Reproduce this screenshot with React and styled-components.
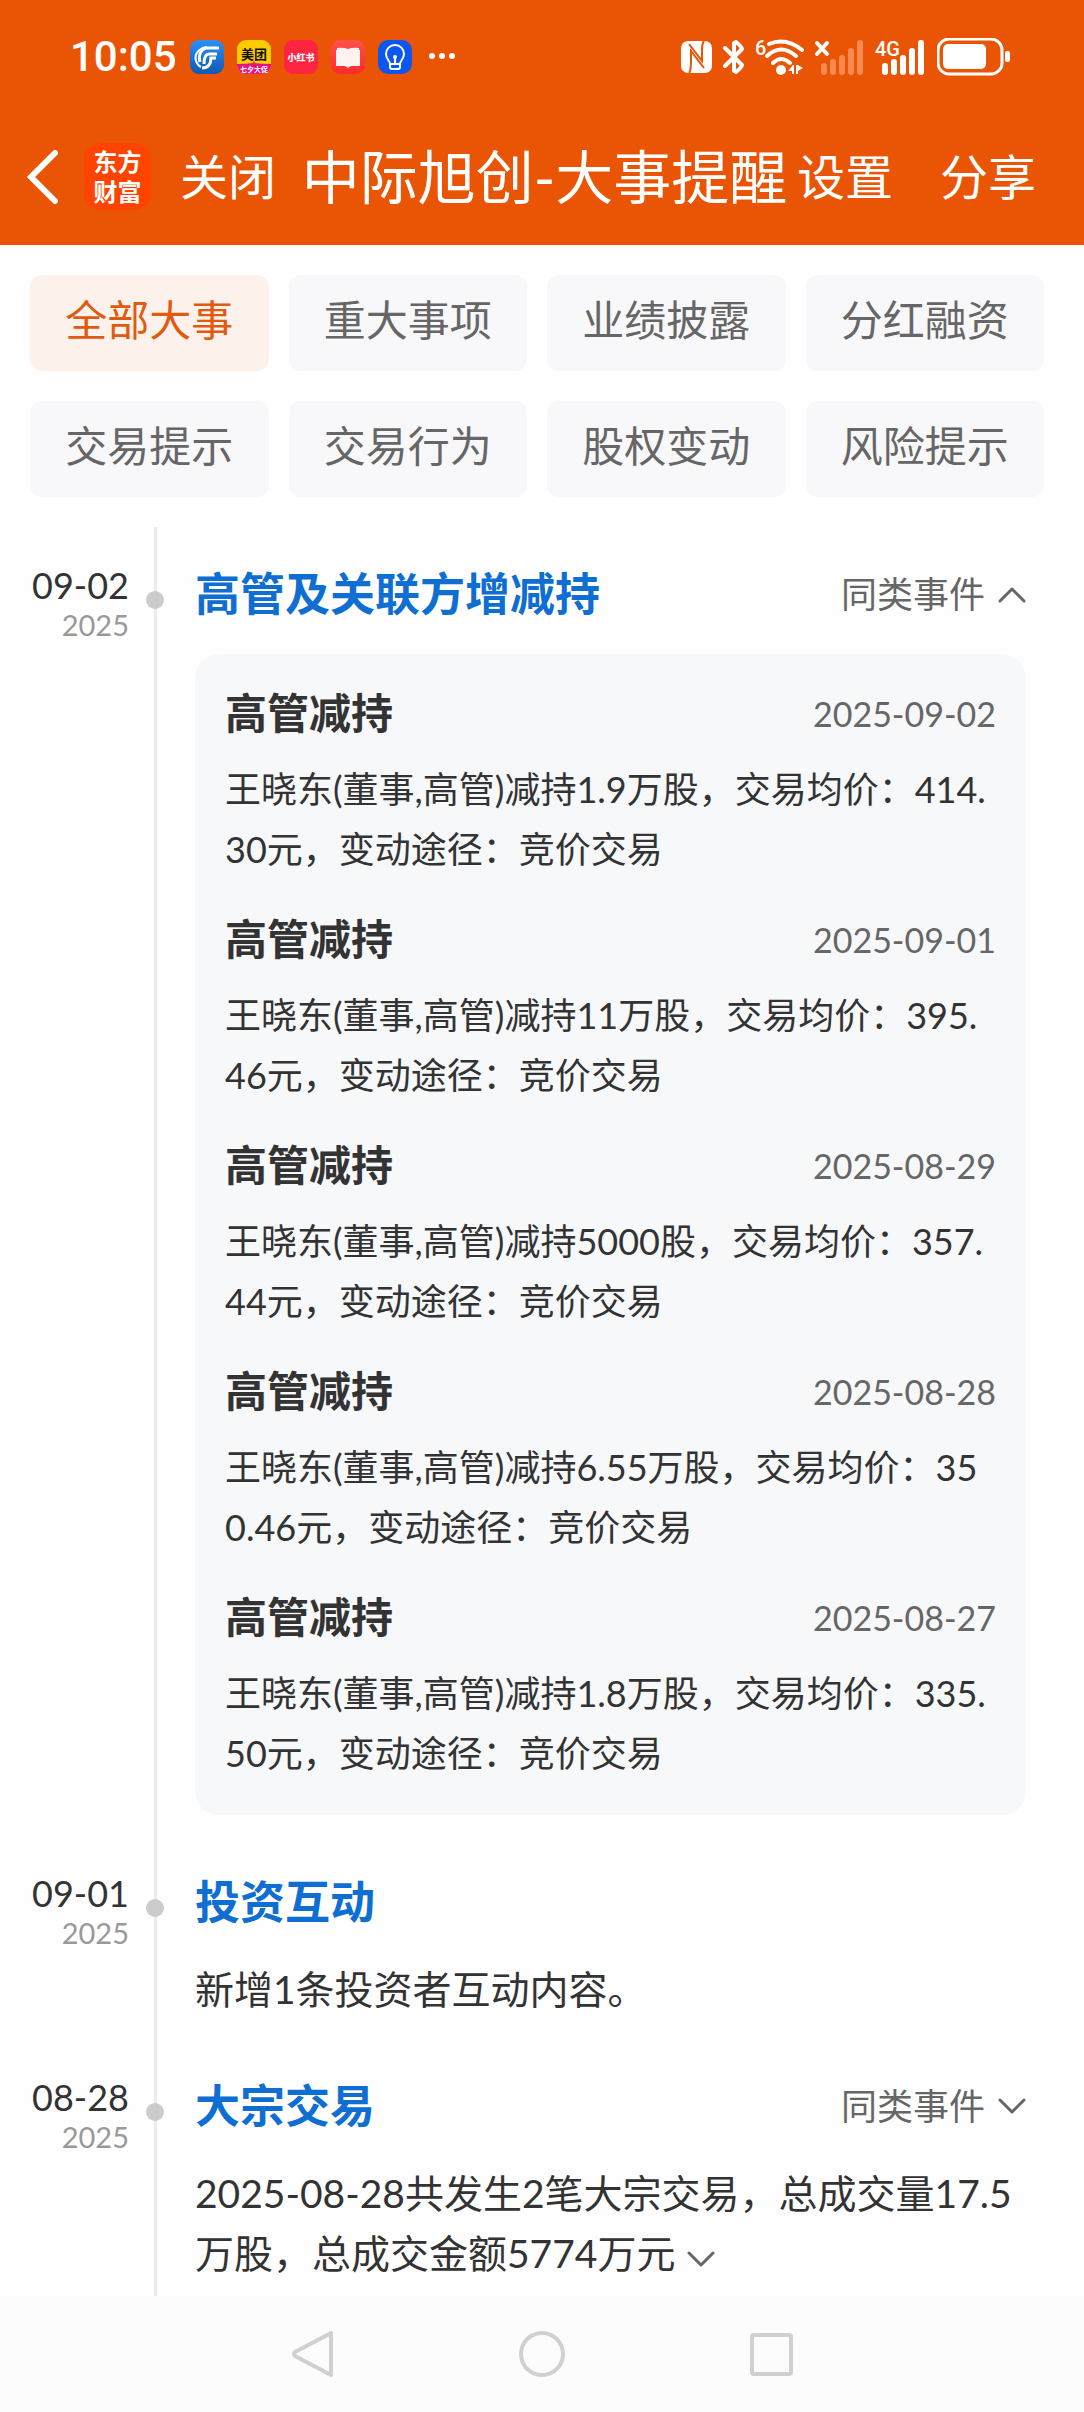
import React, {useState} from "react";
import styled, {createGlobalStyle} from 'styled-components'


// theme
// ------ #E95504  header orange
// ------ #0F6ED2  event title blue
// ------ #333333  text
// ------ #666666  muted text
// ------ #F7F8FA  card

const GlobalStyle = createGlobalStyle`

    * {
        box-sizing: border-box;
    }

    body {
        margin: 0;
        background: #fefefe;
        color: #333;
        font-family: Lato, "Noto Sans CJK SC", sans-serif;
    }

    h1, h2, h3, p, ol {
        margin: 0;
        padding: 0;
    }

    button {
        border: 0;
        padding: 0;
        background: none;
        color: inherit;
        font: inherit;
        cursor: pointer;
    }

    svg {
        display: block;
        flex: none;
    }

`;

const Page = styled.div`
    display: flex;
    flex-direction: column;
    min-height: 100vh;
`;

const TopArea = styled.header`
    background: #E95504;
    color: #fff;
`;

const StatusBar = styled.div`
    display: flex;
    align-items: center;
    justify-content: space-between;
    height: 110px;
    padding: 4px 74px 0 70px;
`;

const StatusGroup = styled.div`
    display: flex;
    align-items: center;
    gap: ${({$gap}) => $gap}px;
`;

const Clock = styled.time`
    font-family: Roboto, sans-serif;
    font-size: 42px;
    font-weight: 500;
    line-height: 44px;
`;

const TitleBar = styled.nav`
    display: flex;
    align-items: center;
    height: 135px;
    padding: 0 48px 2px 27px;
`;

const BarButton = styled.button`
    flex: none;
    font-size: 48px;
    line-height: 64px;
`;

const Logo = styled.div`
    display: grid;
    place-content: center;
    width: 67px;
    height: 67px;
    margin: 0 29px 0 25px;
    border-radius: 16px;
    background: #FF4400;
    font-size: 24px;
    font-weight: 700;
    line-height: 30px;
`;

const PageTitle = styled.h1`
    flex: 1;
    padding-left: 16px;
    text-align: center;
    white-space: nowrap;
    font-size: 58px;
    font-weight: 400;
    line-height: 72px;
`;

const BarActions = styled.div`
    display: flex;
    gap: 47px;
`;

const Tabs = styled.div`
    display: grid;
    grid-template-columns: repeat(4, 1fr);
    gap: 30px 20px;
    padding: 30px 40px 30px 30px;
`;

const Tab = styled.button`
    height: 96px;
    padding-bottom: 12px;
    border-radius: 12px;
    background: ${({$active}) => $active ? '#FDF1EB' : '#F8F8FA'};
    color: ${({$active}) => $active ? '#E05A10' : '#666'};
    font-size: 42px;
`;

const Timeline = styled.ol`
    display: flex;
    flex: 1;
    flex-direction: column;
    list-style: none;
`;

const EventRow = styled.li`
    display: grid;
    grid-template-columns: 129px 66px 1fr;
    padding-right: 58px;

    &:last-child {
        flex: 1;
    }
`;

// the first row starts below the tabs, so every row has its own top space
const EventDate = styled.div`
    padding-top: ${({$top}) => $top}px;
    text-align: right;
`;

const MonthDay = styled.div`
    font-size: 36px;
    line-height: 43px;
`;

const Year = styled.div`
    color: #999;
    font-size: 29px;
    line-height: 35px;
`;

const Rail = styled.div`
    position: relative;
    margin-left: 25px;
    border-left: 3px solid #EBEBEB;
`;

const Dot = styled.span`
    position: absolute;
    top: ${({$top}) => $top + 27}px;
    left: -11px;
    width: 18px;
    height: 18px;
    border-radius: 50%;
    background: #CCC;
`;

const EventBody = styled.div`
    padding-top: ${({$top}) => $top}px;
`;

const EventHead = styled.div`
    display: flex;
    align-items: center;
    justify-content: space-between;
`;

const EventTitle = styled.h2`
    color: #0F6ED2;
    font-size: 45px;
    font-weight: 700;
    line-height: 60px;
`;

const Toggle = styled.button`
    display: flex;
    align-items: center;
    gap: 13px;
    color: #666;
    font-size: 36px;
    line-height: 60px;
`;

const EventText = styled.p`
    margin-top: 27px;
    font-size: 39px;
    line-height: 60px;
    word-break: break-all;
`;

const MoreButton = styled.button`
    margin-left: 12px;
    color: #666;
`;

const Card = styled.div`
    margin-top: 30px;
    padding: 29px 30px 2px;
    border-radius: 24px;
    background: #F7F8FA;
`;

const CardItem = styled.article`
    margin-bottom: 30px;
`;

const CardHead = styled.div`
    display: flex;
    align-items: center;
    justify-content: space-between;
    margin-bottom: 16px;
`;

const CardTitle = styled.h3`
    font-size: 42px;
    font-weight: 700;
    line-height: 60px;
`;

const CardDate = styled.time`
    color: #666;
    font-size: 34px;
`;

const CardText = styled.p`
    font-size: 36px;
    line-height: 60px;
    word-break: break-all;
`;

const SystemNav = styled.footer`
    display: flex;
    align-items: center;
    justify-content: center;
    gap: 183px;
    height: 116px;
    background: #FCFCFC;
`;

const ChevronIcon = styled.svg`
    display: inline-block;
`;


const tabNames = ['全部大事', '重大事项', '业绩披露', '分红融资', '交易提示', '交易行为', '股权变动', '风险提示'];

const reductions = [
    {date: '2025-09-02', text: '王晓东(董事,高管)减持1.9万股，交易均价：414.30元，变动途径：竞价交易'},
    {date: '2025-09-01', text: '王晓东(董事,高管)减持11万股，交易均价：395.46元，变动途径：竞价交易'},
    {date: '2025-08-29', text: '王晓东(董事,高管)减持5000股，交易均价：357.44元，变动途径：竞价交易'},
    {date: '2025-08-28', text: '王晓东(董事,高管)减持6.55万股，交易均价：350.46元，变动途径：竞价交易'},
    {date: '2025-08-27', text: '王晓东(董事,高管)减持1.8万股，交易均价：335.50元，变动途径：竞价交易'},
];

const cjk = '"Noto Sans CJK SC", sans-serif';


const Chevron = ({up}) => (
    <ChevronIcon width="28" height="18" viewBox="0 0 28 18" fill="none" stroke="currentColor" strokeWidth="3" strokeLinecap="round" strokeLinejoin="round">
        <path d={up ? 'M2 16 14 4 26 16' : 'M2 3 14 15 26 3'}/>
    </ChevronIcon>
);

const AppIcons = () => (
    <>
        <svg width="34" height="34" viewBox="0 0 34 34">
            <defs>
                <linearGradient id="bank" x1="0" y1="0" x2="0" y2="1">
                    <stop offset="0" stopColor="#2C90F8"/>
                    <stop offset="1" stopColor="#0F59B4"/>
                </linearGradient>
            </defs>
            <rect width="34" height="34" rx="9" fill="url(#bank)"/>
            <g fill="none" stroke="#fff">
                <path d="M17 7C9 8 4 14 6 21c1 3 3 5 5 6" strokeWidth="2"/>
                <path d="M29 8H18c-7 0-10 7-8 14" strokeWidth="3"/>
                <path d="M27 14h-8c-4 0-5 4-5 10" strokeWidth="3"/>
                <path d="M26 18h-5c0 6-3 10-9 10" strokeWidth="3"/>
            </g>
        </svg>
        <svg width="34" height="34" viewBox="0 0 34 34">
            <defs>
                <clipPath id="tile"><rect width="34" height="34" rx="9"/></clipPath>
            </defs>
            <g clipPath="url(#tile)">
                <rect width="34" height="34" fill="#FFCC00"/>
                <path d="M0 24q9 0 17-1q8 1 17 1v10H0z" fill="#E5127D"/>
                <path d="m17 21 2 3h-4z" fill="#F5333F"/>
            </g>
            <text x="17" y="19" fontSize="13" fontWeight="700" textAnchor="middle" fontFamily={cjk} fill="#111">美团</text>
            <text x="17" y="32" fontSize="7" fontWeight="700" textAnchor="middle" fontFamily={cjk} fill="#fff">七夕大促</text>
        </svg>
        <svg width="34" height="34" viewBox="0 0 34 34">
            <rect width="34" height="34" rx="9" fill="#FF2442"/>
            <text x="17" y="21" fontSize="9" fontWeight="900" textAnchor="middle" fontFamily={cjk} fill="#fff">小红书</text>
        </svg>
        <svg width="34" height="34" viewBox="0 0 34 34">
            <defs>
                <linearGradient id="book" x1="0" y1="0" x2="0" y2="1">
                    <stop offset="0" stopColor="#FF5148"/>
                    <stop offset="1" stopColor="#FF2A2C"/>
                </linearGradient>
            </defs>
            <rect width="34" height="34" rx="9" fill="url(#book)"/>
            <path d="M6 8q7-1 11 1 4-2 11-1v2h1v16h-9l-3 2-3-2H5V10h1z" fill="#FFF2F0"/>
        </svg>
        <svg width="34" height="34" viewBox="0 0 34 34">
            <rect width="34" height="34" rx="10" fill="#0B57F0"/>
            <g fill="none" stroke="#fff" strokeWidth="2">
                <path d="M12 24c0-3-4-5-4-10a9 9 0 0 1 18 0c0 5-4 7-4 10z"/>
                <path d="M12 24v3q0 2 2 2h6q2 0 2-2v-3M17 18v6"/>
            </g>
            <circle cx="17" cy="17" r="2" fill="#fff"/>
        </svg>
        <svg width="34" height="34" viewBox="0 0 34 34" fill="#fff">
            <circle cx="7" cy="16" r="3"/>
            <circle cx="17" cy="16" r="3"/>
            <circle cx="27" cy="16" r="3"/>
        </svg>
    </>
);

const SignalIcons = () => (
    <>
        {/* nfc */}
        <svg width="32" height="34" viewBox="0 0 32 34">
            <rect x="0" y="1" width="31" height="32" rx="7" fill="#fff"/>
            <g fill="none" stroke="#E95504" strokeWidth="2">
                <path d="M8 34Q10 30 10 24V11L23 28"/>
                <path d="M23 0Q21 4 21 10V21L8 4"/>
            </g>
        </svg>
        {/* bluetooth */}
        <svg width="22" height="36" viewBox="0 0 22 36" fill="none" stroke="#fff" strokeWidth="4" strokeLinecap="round" strokeLinejoin="round">
            <path d="M2 9 19 26q0 2-6 7l-2-1V4l2-1q6 5 6 7L2 27"/>
        </svg>
        {/* wifi 6 */}
        <svg width="49" height="46" viewBox="0 -4 49 46">
            <text x="0" y="17" fontSize="20" fontWeight="500" fontFamily="Roboto, sans-serif" fill="#fff">6</text>
            <g fill="none" stroke="#fff" strokeWidth="4" strokeLinecap="round">
                <path d="M14 6Q31-1 47 12"/>
                <path d="M12 18Q26 5 41 18"/>
                <path d="M18 25Q26 17 35 25"/>
            </g>
            <circle cx="26" cy="32" r="5" fill="#fff"/>
            <path d="M33 33l5-6h1v9h-2v-3zM41 27h2l5 3-5 3v3h-2z" fill="#fff"/>
        </svg>
        {/* sim 1, no service */}
        <svg width="51" height="36" viewBox="0 0 51 36" strokeLinecap="round">
            <path d="M3 4 13 15M13 4 3 15" stroke="#fff" strokeWidth="4"/>
            <path d="M10 27v6M19 23v10M28 19v14M37 12v21M46 4v29" stroke="#FA8A50" strokeWidth="6"/>
        </svg>
        {/* sim 2 */}
        <svg width="52" height="44" viewBox="0 -4 52 44">
            <text x="0" y="17" fontSize="20" fontWeight="500" fontFamily="Roboto, sans-serif" fill="#fff">4G</text>
            <path d="M10 27v6M19 23v10M28 19v14M37 12v21M46 4v29" stroke="#fff" strokeWidth="6" strokeLinecap="round"/>
        </svg>
        <svg width="73" height="38" viewBox="0 0 73 38">
            <rect x="1" y="1" width="64" height="35" rx="11" fill="none" stroke="#fff" strokeWidth="3"/>
            <rect x="6" y="6" width="43" height="25" rx="5" fill="#fff"/>
            <rect x="68" y="13" width="5" height="11" rx="2" fill="#fff"/>
        </svg>
    </>
);

const TimelineEvent = ({day, title, top, toggle, open, onToggle, children}) => (
    <EventRow>
        <EventDate $top={top}>
            <MonthDay>{day}</MonthDay>
            <Year>2025</Year>
        </EventDate>
        <Rail><Dot $top={top}/></Rail>
        <EventBody $top={top}>
            <EventHead>
                <EventTitle>{title}</EventTitle>
                {toggle && (
                    <Toggle type="button" aria-expanded={open} onClick={onToggle}>
                        同类事件
                        <Chevron up={open}/>
                    </Toggle>
                )}
            </EventHead>
            {children}
        </EventBody>
    </EventRow>
);

export default function App() {

    const [activeTab, setActiveTab] = useState(tabNames[0]);
    const [open, setOpen] = useState(true);

    return (
        <Page>
            <GlobalStyle/>

            <TopArea>
                <StatusBar>
                    <StatusGroup $gap={13}>
                        <Clock>10:05</Clock>
                        <AppIcons/>
                    </StatusGroup>
                    <StatusGroup $gap={10}>
                        <SignalIcons/>
                    </StatusGroup>
                </StatusBar>

                <TitleBar>
                    <BarButton type="button" aria-label="返回">
                        <svg width="32" height="58" viewBox="0 0 32 58" fill="none" stroke="#fff" strokeWidth="6" strokeLinecap="round" strokeLinejoin="miter">
                            <path d="M28 5 4 29 28 53"/>
                        </svg>
                    </BarButton>
                    <Logo>
                        <span>东方</span>
                        <span>财富</span>
                    </Logo>
                    <BarButton type="button">关闭</BarButton>
                    <PageTitle>中际旭创-大事提醒</PageTitle>
                    <BarActions>
                        <BarButton type="button">设置</BarButton>
                        <BarButton type="button">分享</BarButton>
                    </BarActions>
                </TitleBar>
            </TopArea>

            <Tabs>
                {tabNames.map((name) => (
                    <Tab key={name} type="button" $active={name === activeTab} onClick={() => setActiveTab(name)}>
                        {name}
                    </Tab>
                ))}
            </Tabs>

            <Timeline>
                <TimelineEvent day="09-02" title="高管及关联方增减持" top={37} toggle open={open} onToggle={() => setOpen(!open)}>
                    {open && (
                        <Card>
                            {reductions.map((item) => (
                                <CardItem key={item.date}>
                                    <CardHead>
                                        <CardTitle>高管减持</CardTitle>
                                        <CardDate>{item.date}</CardDate>
                                    </CardHead>
                                    <CardText>{item.text}</CardText>
                                </CardItem>
                            ))}
                        </Card>
                    )}
                </TimelineEvent>

                <TimelineEvent day="09-01" title="投资互动" top={57}>
                    <EventText>新增1条投资者互动内容。</EventText>
                </TimelineEvent>

                <TimelineEvent day="08-28" title="大宗交易" top={57} toggle open={false}>
                    <EventText>
                        2025-08-28共发生2笔大宗交易，总成交量17.5万股，总成交金额5774万元
                        <MoreButton type="button" aria-label="展开"><Chevron/></MoreButton>
                    </EventText>
                </TimelineEvent>
            </Timeline>

            <SystemNav>
                <svg width="46" height="50" viewBox="0 0 46 50" fill="none" stroke="#D0D0D0" strokeWidth="4" strokeLinejoin="round">
                    <path d="M41 4v42L5 27q-2-2 0-4z"/>
                </svg>
                <svg width="46" height="50" viewBox="0 0 46 50" fill="none" stroke="#D0D0D0" strokeWidth="4">
                    <circle cx="23" cy="25" r="21"/>
                </svg>
                <svg width="46" height="50" viewBox="0 0 46 50" fill="none" stroke="#D0D0D0" strokeWidth="4">
                    <rect x="4" y="6" width="39" height="39" rx="2"/>
                </svg>
            </SystemNav>
        </Page>
    );

};
